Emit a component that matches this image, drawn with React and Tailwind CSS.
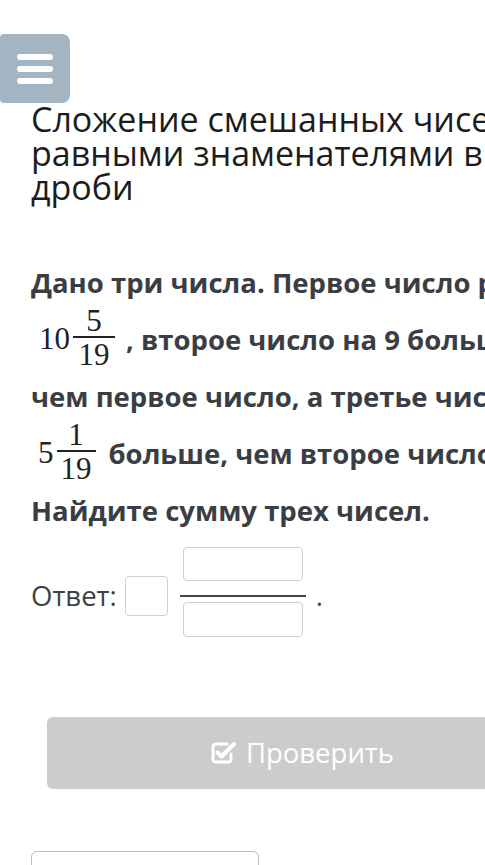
import React from 'react';

function Frac({ num, den, barWidth }) {
  return (
    <span className="flex flex-col items-center mx-[3px]">
      <span className="leading-[30px]">{num}</span>
      <span className={`h-[2px] bg-[#222] ${barWidth}`}></span>
      <span className="leading-[30px] mt-[2px]">{den}</span>
    </span>
  );
}

function CheckSquareIcon() {
  return (
    <svg width="26" height="24" viewBox="0 0 26 24" fill="none">
      <path
        d="M17 3H5.5A2.5 2.5 0 0 0 3 5.5v13A2.5 2.5 0 0 0 5.5 21h13a2.5 2.5 0 0 0 2.5-2.5V13"
        stroke="white"
        strokeWidth="3"
        strokeLinecap="round"
      />
      <path
        d="M7.5 11.5l4 4L24 3"
        stroke="white"
        strokeWidth="4"
        strokeLinecap="round"
        strokeLinejoin="round"
      />
    </svg>
  );
}

export default function App() {
  const serif = { fontFamily: '"Liberation Serif", "Times New Roman", serif' };

  return (
    <div
      className="w-[485px] h-[865px] overflow-hidden bg-white"
      style={{ fontFamily: '"Open Sans", "Noto Sans", sans-serif' }}
    >
      <div className="w-[680px] pt-[34px]">
        {/* Menu button */}
        <div className="w-[70px] h-[69px] bg-[#a3b4c2] rounded-r-lg rounded-l-sm flex flex-col items-center justify-center gap-[6px]">
          <span className="block w-[36px] h-[6px] rounded-sm bg-white"></span>
          <span className="block w-[36px] h-[6px] rounded-sm bg-white"></span>
          <span className="block w-[36px] h-[6px] rounded-sm bg-white"></span>
        </div>

        {/* Title */}
        <h1 className="ml-[31px] mt-[-1px] w-[600px] text-[34px] leading-[34px] text-[#1c1c1c] font-normal">
          Сложение смешанных чисел с равными знаменателями в виде дроби
        </h1>

        {/* Task text */}
        <div className="ml-[31px] mt-[50px] text-[27.5px] font-bold text-[#3a3e44] whitespace-nowrap">
          <div className="h-[57px] flex items-center">
            <span>Дано три числа. Первое число равно</span>
          </div>
          <div className="h-[57px] flex items-center">
            <span className="flex items-center ml-[8px] mt-[-4px] text-[31px] font-normal text-[#222]" style={serif}>
              <span className="mt-[4px]">10</span>
              <Frac num="5" den="19" barWidth="w-[42px]" />
            </span>
            <span className="ml-[8px]">, второе число на 9 больше,</span>
          </div>
          <div className="h-[57px] flex items-center">
            <span>чем первое число, а третье число на</span>
          </div>
          <div className="h-[57px] flex items-center">
            <span className="flex items-center ml-[7px] mt-[-4px] text-[31px] font-normal text-[#222]" style={serif}>
              <span className="mt-[4px]">5</span>
              <Frac num="1" den="19" barWidth="w-[39px]" />
            </span>
            <span className="ml-[10px]">больше, чем второе число.</span>
          </div>
          <div className="h-[57px] flex items-center">
            <span>Найдите сумму трех чисел.</span>
          </div>
        </div>

        {/* Answer */}
        <div className="ml-[31px] mt-[8px] flex items-start text-[27.5px] text-[#3d4146]">
          <span className="mt-[30px] leading-[37px]">Ответ:</span>
          <div className="ml-[8px] mt-[29px] w-[43px] h-[40px] border border-[#c9d1d8] rounded"></div>
          <div className="ml-[12px] flex flex-col items-center w-[126px]">
            <div className="w-[120px] h-[34px] border border-[#c9d1d8] rounded"></div>
            <div className="mt-[14px] w-[126px] h-[2px] bg-[#444]"></div>
            <div className="mt-[5px] w-[120px] h-[35px] border border-[#c9d1d8] rounded"></div>
          </div>
          <span className="ml-[10px] mt-[30px] leading-[37px]">.</span>
        </div>

        {/* Check button */}
        <div className="ml-[47px] mt-[80px] w-[510px] h-[72px] bg-[#cccccc] rounded-md flex items-center justify-center gap-[10px] text-white text-[27.5px]">
          <CheckSquareIcon />
          <span>Проверить</span>
        </div>

        {/* Next button (partially visible) */}
        <div className="ml-[31px] mt-[62px] w-[228px] h-[48px] border border-[#bbbbbb] rounded-md"></div>
      </div>
    </div>
  );
}
